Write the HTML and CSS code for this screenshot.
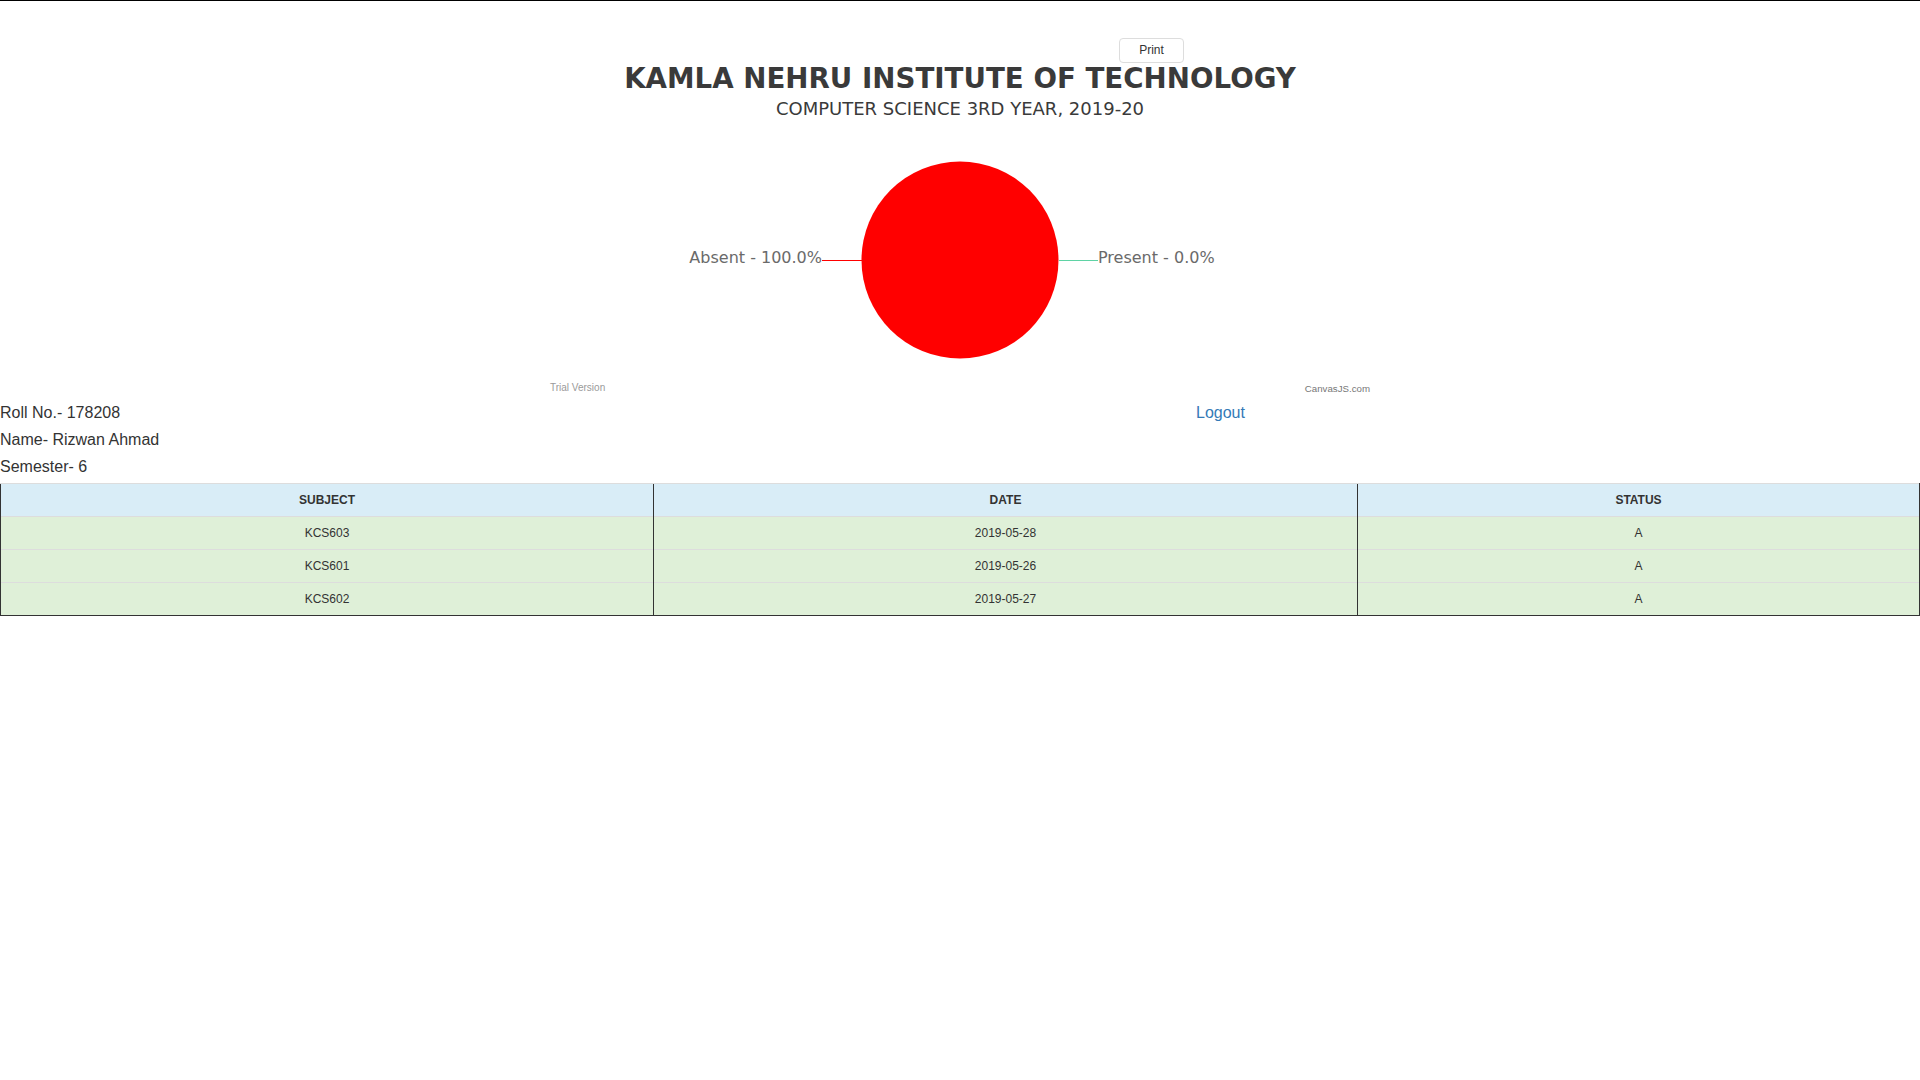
FILE: index.html
```html
<!DOCTYPE html>
<html>
<head>
<meta charset="utf-8">
<title>Attendance</title>
<link rel="stylesheet" href="styles.css">
</head>
<body>
<div class="chart-wrap">
  <button class="print-btn">Print</button>
  <svg class="chart" width="830" height="397" viewBox="0 0 830 397">
    <text class="title" x="415" y="87" text-anchor="middle">KAMLA NEHRU INSTITUTE OF TECHNOLOGY</text>
    <text class="subtitle" x="415" y="114" text-anchor="middle">COMPUTER SCIENCE 3RD YEAR, 2019-20</text>
    <circle cx="415" cy="259" r="98.5" fill="#ff0000"/>
    <line x1="277" y1="259.5" x2="317" y2="259.5" stroke="#ff0000" stroke-width="1.2"/>
    <line x1="514" y1="259.5" x2="553" y2="259.5" stroke="#5fd3a5" stroke-width="1.2"/>
    <text class="idx" x="277" y="262" text-anchor="end">Absent - 100.0%</text>
    <text class="idx" x="553" y="262">Present - 0.0%</text>
    <text class="trial" x="5" y="390">Trial Version</text>
    <text class="credit" x="825" y="391" text-anchor="end">CanvasJS.com</text>
  </svg>
</div>
<div class="info">
  <div class="info-row">
    <span>Roll No.- 178208</span>
    <a class="logout" href="#">Logout</a>
  </div>
  <div class="info-row"><span>Name- Rizwan Ahmad</span></div>
  <div class="info-row"><span>Semester- 6</span></div>
</div>
<table class="att">
  <thead>
    <tr class="head">
      <th class="c-subj">SUBJECT</th>
      <th class="c-date">DATE</th>
      <th class="c-stat">STATUS</th>
    </tr>
  </thead>
  <tbody>
    <tr class="ok"><td>KCS603</td><td>2019-05-28</td><td class="last">A</td></tr>
    <tr class="ok"><td>KCS601</td><td>2019-05-26</td><td class="last">A</td></tr>
    <tr class="ok"><td>KCS602</td><td>2019-05-27</td><td class="last">A</td></tr>
  </tbody>
</table>
</body>
</html>
```

FILE: styles.css
```css
html, body {
  margin: 0;
  padding: 0;
  background: #fff;
}
body {
  border-top: 1px solid #000;
  font-family: "Liberation Sans", Arial, Helvetica, sans-serif;
  font-size: 16px;
  color: #333;
}
.chart-wrap {
  position: relative;
  width: 830px;
  height: 397px;
  margin: 0 auto;
}
.chart {
  display: block;
}
.print-btn {
  position: absolute;
  left: 574px;
  top: 37px;
  width: 65px;
  height: 25px;
  padding: 0;
  background: #fff;
  border: 1px solid #ddd;
  border-radius: 4px;
  font-family: "Liberation Sans", Arial, sans-serif;
  font-size: 12px;
  color: #333;
  line-height: 17px;
}
.title {
  font-family: "DejaVu Sans", Verdana, sans-serif;
  font-weight: bold;
  font-size: 27.7px;
  fill: #3a3a3a;
}
.subtitle {
  font-family: "DejaVu Sans", Verdana, sans-serif;
  font-size: 18px;
  fill: #3a3a3a;
}
.idx {
  font-family: "DejaVu Sans", Verdana, sans-serif;
  font-size: 16px;
  fill: #6a6a6a;
}
.trial {
  font-family: "Liberation Sans", Arial, sans-serif;
  font-size: 10px;
  fill: #9a9a9a;
}
.credit {
  font-family: "Liberation Sans", Arial, sans-serif;
  font-size: 9.7px;
  fill: #777;
}
.info {
  margin-top: 1px;
  line-height: 27px;
}
.info-row {
  display: grid;
  grid-template-columns: 1196px auto;
}
.logout {
  color: #337ab7;
  text-decoration: none;
}
.att {
  width: 100%;
  margin-top: 3px;
  border-collapse: collapse;
  border-spacing: 0;
  font-size: 12px;
  line-height: 16px;
  border-bottom: 1px solid #333;
}
.att th, .att td {
  padding: 8px;
  text-align: center;
  border-top: 1px solid #ddd;
  border-left: 1px solid #333;
}
.att th.c-stat, .att td.last {
  border-right: 1px solid #333;
}
.att th {
  font-weight: bold;
}
.c-subj { width: 636px; }
.c-date { width: 687px; }
.head { background: #d9edf7; }
.ok { background: #dff0d8; }
```
